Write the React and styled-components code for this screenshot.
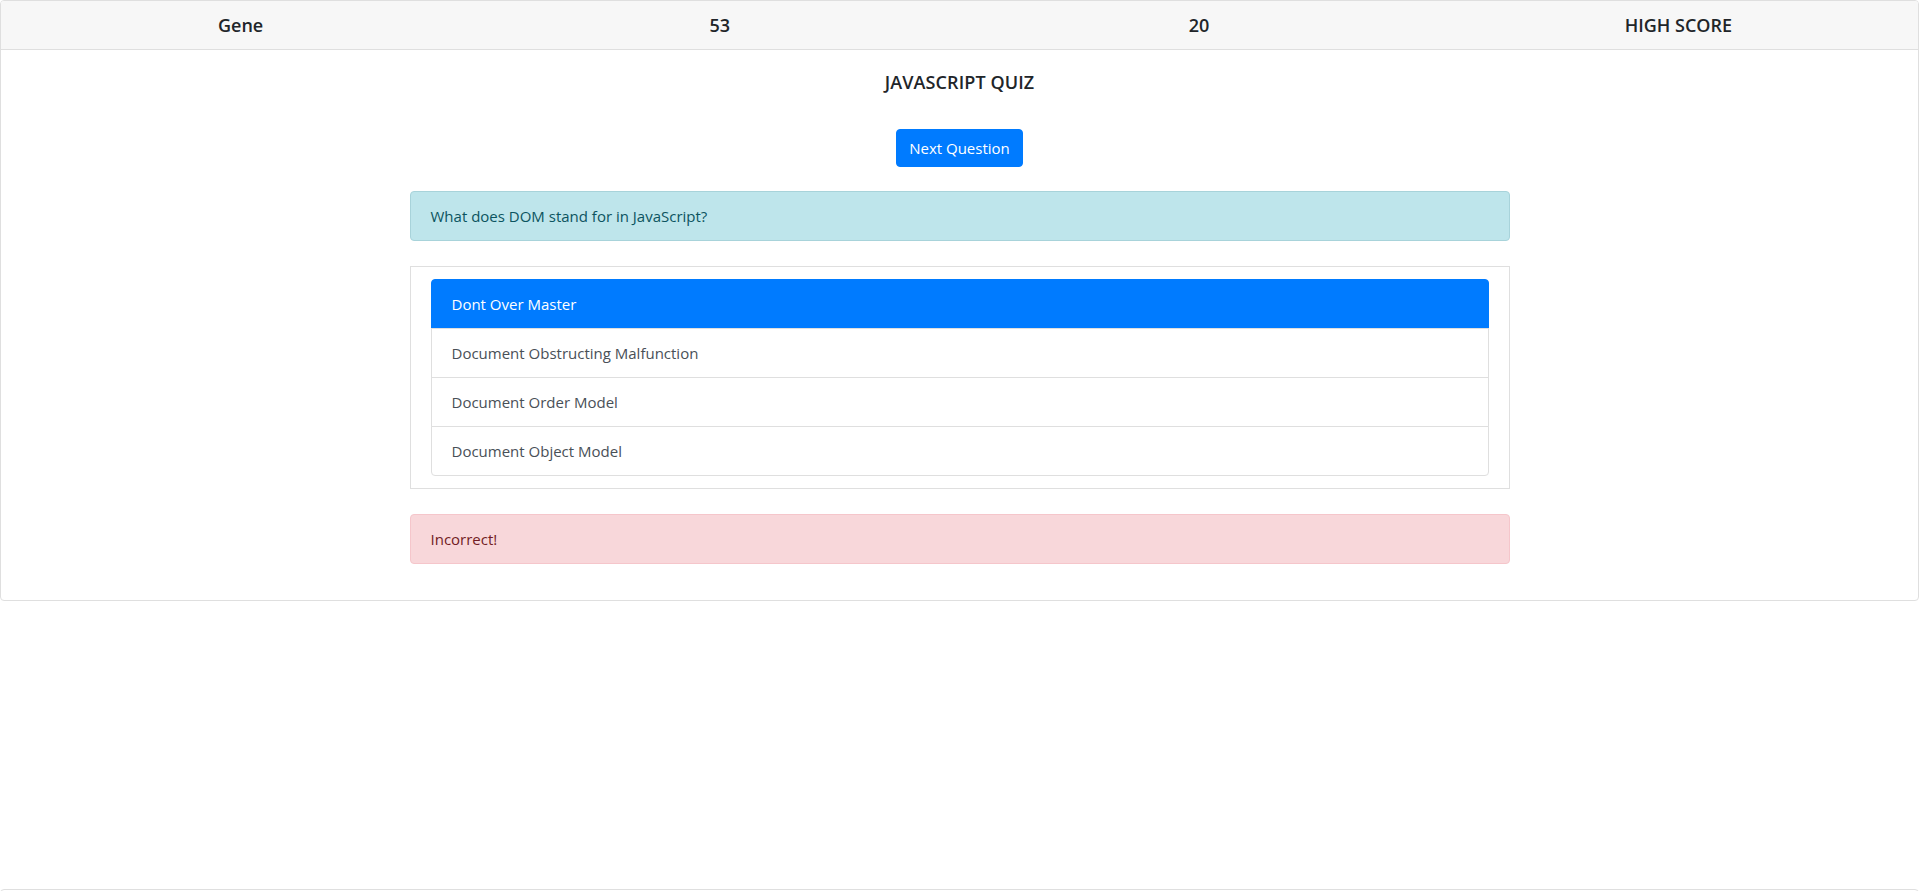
import React from "react";
import styled, { createGlobalStyle } from "styled-components";

const Global = createGlobalStyle`
  html, body { margin: 0; padding: 0; background: #fff; }
  body {
    font-family: "Open Sans", "Noto Sans", "Liberation Sans", sans-serif;
    font-size: 16px;
    line-height: 1.5;
    color: #212529;
  }
  * { box-sizing: border-box; }
`;

const Card = styled.div`
  border: 1px solid #dfdfdf;
  border-radius: 4px;
  background: #fff;
  overflow: hidden;
`;

const ScoreBar = styled.div`
  display: grid;
  grid-template-columns: repeat(4, 1fr);
  background: #f7f7f7;
  border-bottom: 1px solid #dfdfdf;
  padding: 12px 0;
`;

const ScoreCell = styled.h5`
  margin: 0;
  text-align: center;
  font-size: 18px;
  font-weight: 600;
  line-height: 24px;
  color: #212529;
`;

const Body = styled.div`
  display: flex;
  flex-direction: column;
  align-items: center;
  padding: 20px 20px 20px;
`;

const Title = styled.h5`
  margin: 0 0 35px;
  font-size: 18px;
  font-weight: 600;
  line-height: 24px;
  letter-spacing: 0.1px;
  color: #212529;
`;

const Button = styled.button`
  font-family: inherit;
  font-size: 15px;
  line-height: 24px;
  padding: 6px 12px;
  color: #fff;
  background: #007bff;
  border: 1px solid #007bff;
  border-radius: 4px;
  white-space: nowrap;
  cursor: pointer;
  margin-bottom: 24px;
`;

const Alert = styled.div`
  width: 1100px;
  padding: 12px 20px;
  border: 1px solid ${(p) => (p.$variant === "danger" ? "#f5c6cb" : "#a8d3da")};
  background: ${(p) => (p.$variant === "danger" ? "#f8d7da" : "#bee5eb")};
  color: ${(p) => (p.$variant === "danger" ? "#721c24" : "#0c5460")};
  border-radius: 4px;
  font-size: 15px;
  line-height: 24px;
  margin-bottom: ${(p) => p.$mb || 0}px;
`;

const AnswerCard = styled.div`
  width: 1100px;
  border: 1px solid #dfdfdf;
  padding: 12px 20px;
  margin-bottom: 25px;
`;

const List = styled.ul`
  list-style: none;
  margin: 0;
  padding: 0;
  display: flex;
  flex-direction: column;
`;

const Item = styled.li`
  padding: 12px 20px;
  font-size: 15px;
  line-height: 24px;
  border: 1px solid ${(p) => (p.$active ? "#007bff" : "#dfdfdf")};
  background: ${(p) => (p.$active ? "#007bff" : "#fff")};
  color: ${(p) => (p.$active ? "#fff" : "#495057")};
  margin-bottom: -1px;
  &:first-child { border-radius: 4px 4px 0 0; }
  &:last-child { border-radius: 0 0 4px 4px; margin-bottom: 0; }
`;

const NextCard = styled.div`
  margin-top: 288px;
  height: 60px;
  border: 1px solid #dfdfdf;
  border-radius: 4px;
`;

const answers = [
  "Dont Over Master",
  "Document Obstructing Malfunction",
  "Document Order Model",
  "Document Object Model",
];

export default function App() {
  return (
    <>
      <Global />
      <Card>
        <ScoreBar>
          <ScoreCell>Gene</ScoreCell>
          <ScoreCell>53</ScoreCell>
          <ScoreCell>20</ScoreCell>
          <ScoreCell>HIGH SCORE</ScoreCell>
        </ScoreBar>
        <Body>
          <Title>JAVASCRIPT QUIZ</Title>
          <Button>Next Question</Button>
          <Alert $mb={25}>What does DOM stand for in JavaScript?</Alert>
          <AnswerCard>
            <List>
              {answers.map((a, i) => (
                <Item key={a} $active={i === 0}>
                  {a}
                </Item>
              ))}
            </List>
          </AnswerCard>
          <Alert $variant="danger" $mb={16}>Incorrect!</Alert>
        </Body>
      </Card>
      <NextCard />
    </>
  );
}
